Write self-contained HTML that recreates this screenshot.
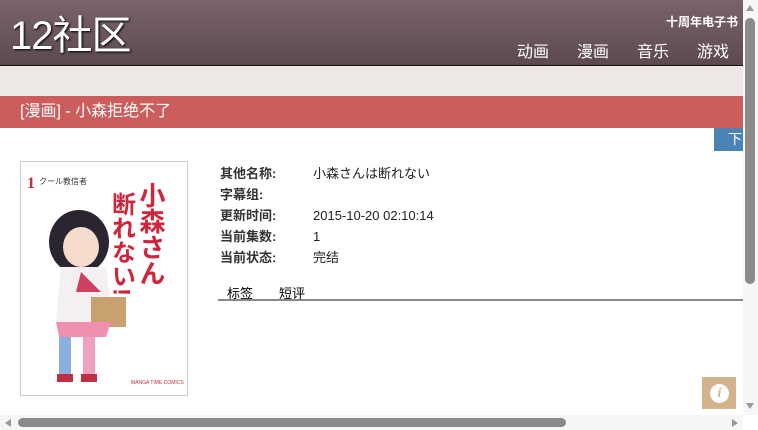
<!DOCTYPE html>
<html><head><meta charset="utf-8"><style>
*{margin:0;padding:0;box-sizing:border-box}
body{width:758px;height:430px;overflow:hidden;background:#fff;font-family:"Liberation Sans","Noto Sans CJK SC",sans-serif;position:relative}
.hdr{position:absolute;left:0;top:0;width:743px;height:66px;background:linear-gradient(#7a646c,#5c4950);border-bottom:1px solid #111}
.logo{position:absolute;left:10px;top:13px;color:#fff;font-size:40px;line-height:46px;text-shadow:1px 1px 2px #000;letter-spacing:-1px}
.sub{position:absolute;right:5px;top:13px;color:#fff;font-size:12px;font-weight:bold}
.nav{position:absolute;right:14px;top:38px;color:#fff;font-size:16px}
.nav span{margin-left:28px}
.band{position:absolute;left:0;top:66px;width:743px;height:30px;background:#ede8e5}
.red{position:absolute;left:0;top:96px;width:743px;height:32px;background:#cd5c5c;color:#fff;font-size:16px;line-height:32px;padding-left:20px}
.dl{position:absolute;left:714px;top:128px;width:29px;height:23px;background:#4a84b5;color:#fff;font-size:14px;line-height:23px;padding-left:14px}
.cover{position:absolute;left:20px;top:161px;width:168px;height:235px;border:1px solid #ccc;background:#fff;overflow:hidden}
.info{position:absolute;left:220px;top:163px;font-size:13px;color:#222}
.info div{height:21px;line-height:21px}
.info b{display:inline-block;width:93px;font-weight:bold;color:#333}
.tabs{position:absolute;left:218px;top:282px;width:525px;height:19px;border-bottom:2px solid #888;font-size:13px}
.tabs span{position:absolute;top:1px}
.vs{position:absolute;left:743px;top:0;width:15px;height:415px;background:#f6f6f6}
.vt{position:absolute;left:745px;top:18px;width:10px;height:266px;background:#8a8a8a;border-radius:5px}
.hs{position:absolute;left:0;top:415px;width:743px;height:15px;background:#f6f6f6}
.ht{position:absolute;left:18px;top:418px;width:548px;height:9px;background:#8a8a8a;border-radius:5px}
.corner{position:absolute;left:743px;top:415px;width:15px;height:15px;background:#fff}
.ib{position:absolute;left:702px;top:377px;width:34px;height:32px;background:#d3b38c}
.ib div{position:absolute;left:8px;top:7px;width:19px;height:19px;border-radius:50%;background:#fff;color:#d3b38c;font:italic bold 14px/19px "Liberation Serif",serif;text-align:center}
</style></head><body>
<div class="hdr"><div class="logo">12社区</div><div class="sub">十周年电子书</div><div class="nav"><span>动画</span><span>漫画</span><span>音乐</span><span>游戏</span></div></div>
<div class="band"></div>
<div class="red">[漫画] - 小森拒绝不了</div>
<div class="dl">下</div>
<div class="cover">
<svg width="168" height="235" viewBox="0 0 168 235">
<text x="6" y="26" fill="#c8283c" font-size="16" font-weight="bold" font-family="Liberation Serif">1</text>
<text x="18" y="22" fill="#333" font-size="8">クール教信者</text>
<text x="130" y="20" fill="#d0243a" font-size="26" font-weight="bold" writing-mode="tb">小森さん</text>
<text x="100" y="30" fill="#d0243a" font-size="24" font-weight="bold" writing-mode="tb">断れない!</text>
<ellipse cx="58" cy="80" rx="30" ry="32" fill="#2a2530"/>
<ellipse cx="60" cy="85" rx="18" ry="20" fill="#f6dccc"/>
<path d="M40 105 L85 105 L92 160 L35 160 Z" fill="#f4f0f2"/>
<path d="M60 110 L80 130 L55 130 Z" fill="#d04060"/>
<rect x="70" y="135" width="35" height="30" fill="#c9a070"/>
<path d="M35 160 L90 160 L85 175 L38 175 Z" fill="#f090b0"/>
<rect x="38" y="175" width="12" height="40" fill="#8ab0e0"/>
<rect x="62" y="175" width="12" height="40" fill="#f0a0c0"/>
<rect x="36" y="212" width="16" height="8" fill="#c03040"/>
<rect x="60" y="212" width="16" height="8" fill="#c03040"/>
<text x="110" y="222" fill="#c03040" font-size="5">MANGA TIME COMICS</text>
</svg></div>
<div class="info">
<div><b>其他名称:</b>小森さんは断れない</div>
<div><b>字幕组:</b></div>
<div><b>更新时间:</b>2015-10-20 02:10:14</div>
<div><b>当前集数:</b>1</div>
<div><b>当前状态:</b>完结</div>
</div>
<div class="tabs"><span style="left:9px">标签</span><span style="left:61px">短评</span></div>
<div class="ib"><div>i</div></div>
<div class="vs"></div><div class="vt"></div>
<div class="hs"></div><div class="ht"></div><div class="corner"></div>
<svg style="position:absolute;left:745px;top:4px" width="10" height="8"><path d="M5 1 L9 7 L1 7Z" fill="#999"/></svg>
<svg style="position:absolute;left:745px;top:402px" width="10" height="8"><path d="M1 1 L9 1 L5 7Z" fill="#999"/></svg>
<svg style="position:absolute;left:4px;top:418px" width="8" height="10"><path d="M7 1 L7 9 L1 5Z" fill="#999"/></svg>
<svg style="position:absolute;left:731px;top:418px" width="8" height="10"><path d="M1 1 L1 9 L7 5Z" fill="#999"/></svg>
</body></html>
